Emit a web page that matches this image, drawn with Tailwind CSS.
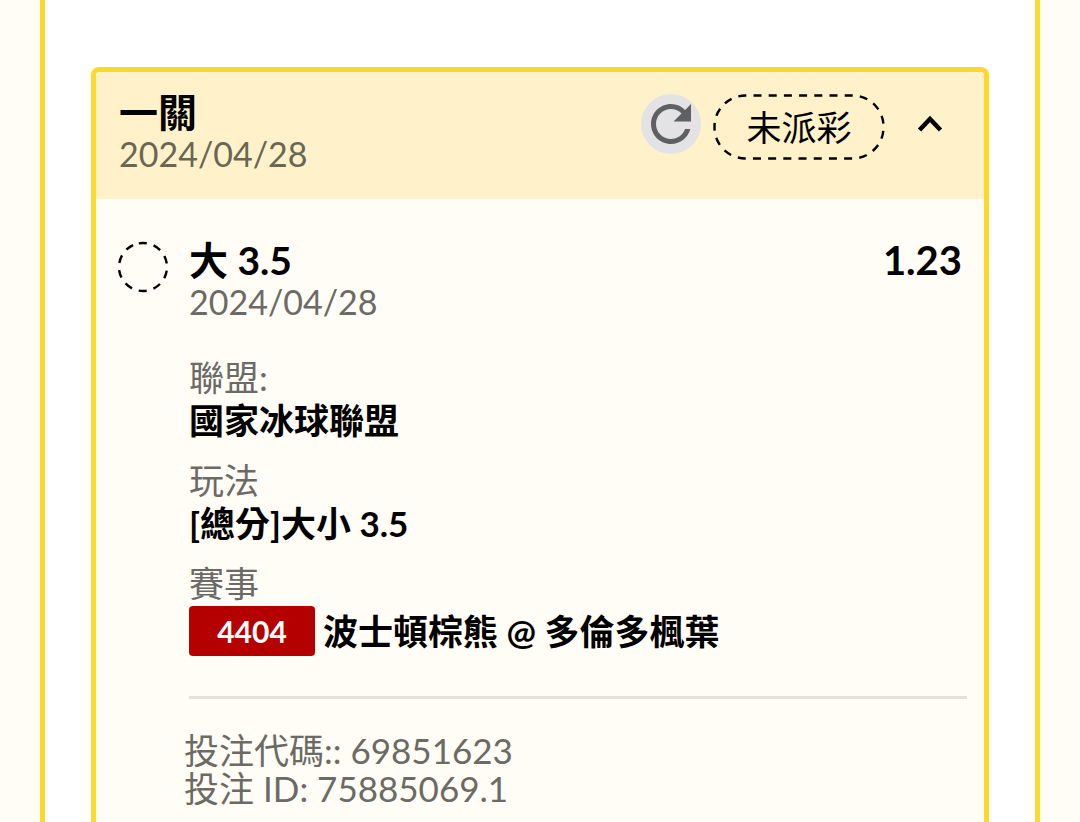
<!DOCTYPE html>
<html lang="zh-Hant">
<head>
  <meta charset="UTF-8" />
  <meta name="viewport" content="width=device-width, initial-scale=1.0"/>
  <title>投注紀錄</title>
  <script src="https://cdn.jsdelivr.net/npm/@tailwindcss/browser@4"></script>
</head>
<body class="bg-[#fffdf5] px-10 text-black font-['Lato','Noto_Sans_CJK_TC',sans-serif]">

  <main class="min-h-screen bg-white border-x-5 border-[#ffd82b] pt-[67px] px-[46px]">

    <!-- Bet Card -->
    <article class="min-h-[calc(100vh-67px)] bg-[#fffdf5] border-5 border-b-0 border-[#ffd82b] rounded-t-lg">

      <!-- Header -->
      <header class="flex items-start justify-between bg-[#fff2cb] pt-5 pb-6 pl-[23px] pr-[39px] rounded-t-sm">
        <div>
          <h1 class="text-[39px] leading-[41px] font-bold">一關</h1>
          <p class="text-[34px] leading-[42px] text-[#6b6554]">2024/04/28</p>
        </div>
        <div class="flex items-start pt-[2px]">
          <button type="button" aria-label="重新整理" class="size-15 rounded-full bg-[#e3e3e6] mr-3">
            <svg class="size-15" viewBox="0 0 24 24" fill="#5f6062">
              <path d="M17.65 6.35C16.2 4.9 14.21 4 12 4c-4.42 0-7.99 3.58-7.99 8s3.57 8 7.99 8c3.73 0 6.84-2.55 7.73-6h-2.08c-.82 2.33-3.04 4-5.65 4-3.31 0-6-2.69-6-6s2.69-6 6-6c1.66 0 3.14.69 4.22 1.78L13 11h7V4l-2.35 2.35z"/>
            </svg>
          </button>
          <span class="relative w-[172px] h-[66px] flex items-center justify-center text-[35px]">
            <svg class="absolute inset-0 size-full" viewBox="0 0 172 66">
              <rect x="1.500" y="1.500" width="169" height="63" rx="31" fill="none" stroke="#000" stroke-width="2.400" stroke-dasharray="8 7.200" stroke-dashoffset="-8"/>
            </svg>
            未派彩
          </span>
          <button type="button" aria-label="收合" class="mt-4 ml-[30px]">
            <svg class="w-[30px] h-[30px]" viewBox="0 0 30 30" fill="none" stroke="#000" stroke-width="4.500">
              <path d="M4.500 20L15 9L25.500 20"/>
            </svg>
          </button>
        </div>
      </header>

      <!-- Bet Detail -->
      <section class="flex pt-[41px] pl-[21px] pr-[17px]">
        <svg class="size-[52px] shrink-0 mt-px mr-5" viewBox="0 0 52 52">
          <circle cx="26" cy="26" r="24" fill="none" stroke="#000" stroke-width="2.400" stroke-dasharray="8 7.080" transform="rotate(-100 26 26)"/>
        </svg>
        <div class="flex-1">
          <div class="flex justify-between pr-[5px]">
            <h2 class="text-[39px] leading-[41px] font-bold">大 3.5</h2>
            <b class="text-[40px] leading-[41px]">1.23</b>
          </div>
          <p class="text-[34px] leading-[42px] text-[#6b6a67]">2024/04/28</p>

          <dl class="mt-[33px] text-[35px] leading-[43px]">
            <dt class="text-[#6b6a67]">聯盟:</dt>
            <dd class="font-bold mb-[17px]">國家冰球聯盟</dd>
            <dt class="text-[#6b6a67]">玩法</dt>
            <dd class="font-bold mb-[17px]">[總分]大小 3.5</dd>
            <dt class="text-[#6b6a67]">賽事</dt>
            <dd class="font-bold flex items-center gap-2 mt-px">
              <span class="w-[126px] bg-[#b50000] text-white text-center text-[30px] leading-[50px] rounded-sm">4404</span>
              波士頓棕熊 @ 多倫多楓葉
            </dd>
          </dl>

          <hr class="mt-10 mb-8 border-t-3 border-[#e5e2dc]"/>

          <div class="-ml-[5px] text-[35px] leading-[38px] text-[#6b6a64]">
            <p>投注代碼:: 69851623</p>
            <p>投注 ID: 75885069.1</p>
          </div>
        </div>
      </section>
    </article>
  </main>

</body>
</html>
